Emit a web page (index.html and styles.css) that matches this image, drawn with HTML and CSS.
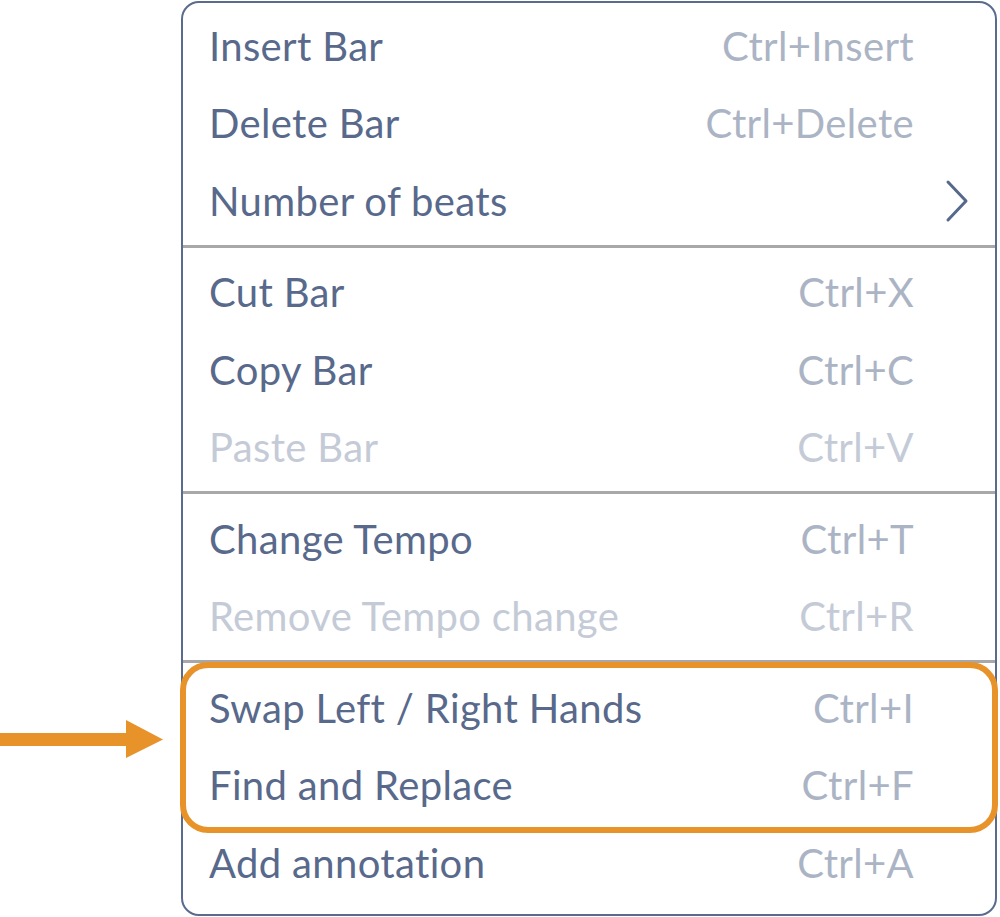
FILE: index.html
```html
<!DOCTYPE html>
<html lang="en">
<head>
<meta charset="utf-8">
<title>Context menu</title>
<link rel="stylesheet" href="styles.css">
</head>
<body>
<div class="stage">
  <div class="menu">
    <div class="item"><span class="label">Insert Bar</span><span class="key">Ctrl+Insert</span></div>
    <div class="item"><span class="label">Delete Bar</span><span class="key">Ctrl+Delete</span></div>
    <div class="item has-sub"><span class="label">Number of beats</span>
      <svg class="chev" width="24" height="44" viewBox="0 0 24 44"><path d="M3 3 L21 22 L3 41" fill="none" stroke="#56688b" stroke-width="3" stroke-linecap="round" stroke-linejoin="round"/></svg>
    </div>
    <div class="sep"></div>
    <div class="item"><span class="label">Cut Bar</span><span class="key">Ctrl+X</span></div>
    <div class="item"><span class="label">Copy Bar</span><span class="key">Ctrl+C</span></div>
    <div class="item disabled"><span class="label">Paste Bar</span><span class="key">Ctrl+V</span></div>
    <div class="sep"></div>
    <div class="item"><span class="label">Change Tempo</span><span class="key">Ctrl+T</span></div>
    <div class="item disabled"><span class="label">Remove Tempo change</span><span class="key">Ctrl+R</span></div>
    <div class="sep"></div>
    <div class="item"><span class="label">Swap Left / Right Hands</span><span class="key">Ctrl+I</span></div>
    <div class="item"><span class="label">Find and Replace</span><span class="key">Ctrl+F</span></div>
    <div class="item"><span class="label">Add annotation</span><span class="key">Ctrl+A</span></div>
  </div>
  <div class="highlight"></div>
  <svg class="arrow" width="170" height="40" viewBox="0 0 170 40"><rect x="0" y="13" width="128" height="13" fill="#e8922a"/><polygon points="126,0 163,19.5 126,38" fill="#e8922a"/></svg>
</div>
</body>
</html>
```
FILE: styles.css
```css
html, body {
  margin: 0;
  padding: 0;
  background: #ffffff;
}

.stage {
  position: relative;
  width: 1000px;
  height: 917px;
  overflow: hidden;
  font-family: "Lato", "Noto Sans", "Liberation Sans", sans-serif;
}

.menu {
  box-sizing: border-box;
  width: 816px;
  height: 915px;
  margin: 1px 0 0 181px;
  padding: 4px 0 12px 0;
  border: 2px solid #5a6b8d;
  border-radius: 18px;
  background: #ffffff;
  display: flex;
  flex-direction: column;
}

.item {
  height: 77.5px;
  flex: 0 0 auto;
  display: flex;
  align-items: center;
  justify-content: space-between;
  padding: 0 81px 0 26px;
  font-size: 40px;
  letter-spacing: 0.35px;
  color: #58698b;
}

.item .key {
  color: #abb4c4;
}

.item.disabled .label,
.item.disabled .key {
  color: #c4cbd7;
}

.item.has-sub {
  padding-right: 26px;
}

.chev {
  display: block;
}

.sep {
  flex: 0 0 auto;
  height: 3px;
  margin: 5px 0 6px 0;
  background: #a8a8a8;
}

.highlight {
  position: absolute;
  left: 180px;
  top: 662px;
  width: 818px;
  height: 171px;
  box-sizing: border-box;
  border: 6px solid #e8922a;
  border-radius: 28px;
}

.arrow {
  position: absolute;
  left: 0;
  top: 720px;
  display: block;
}
```
